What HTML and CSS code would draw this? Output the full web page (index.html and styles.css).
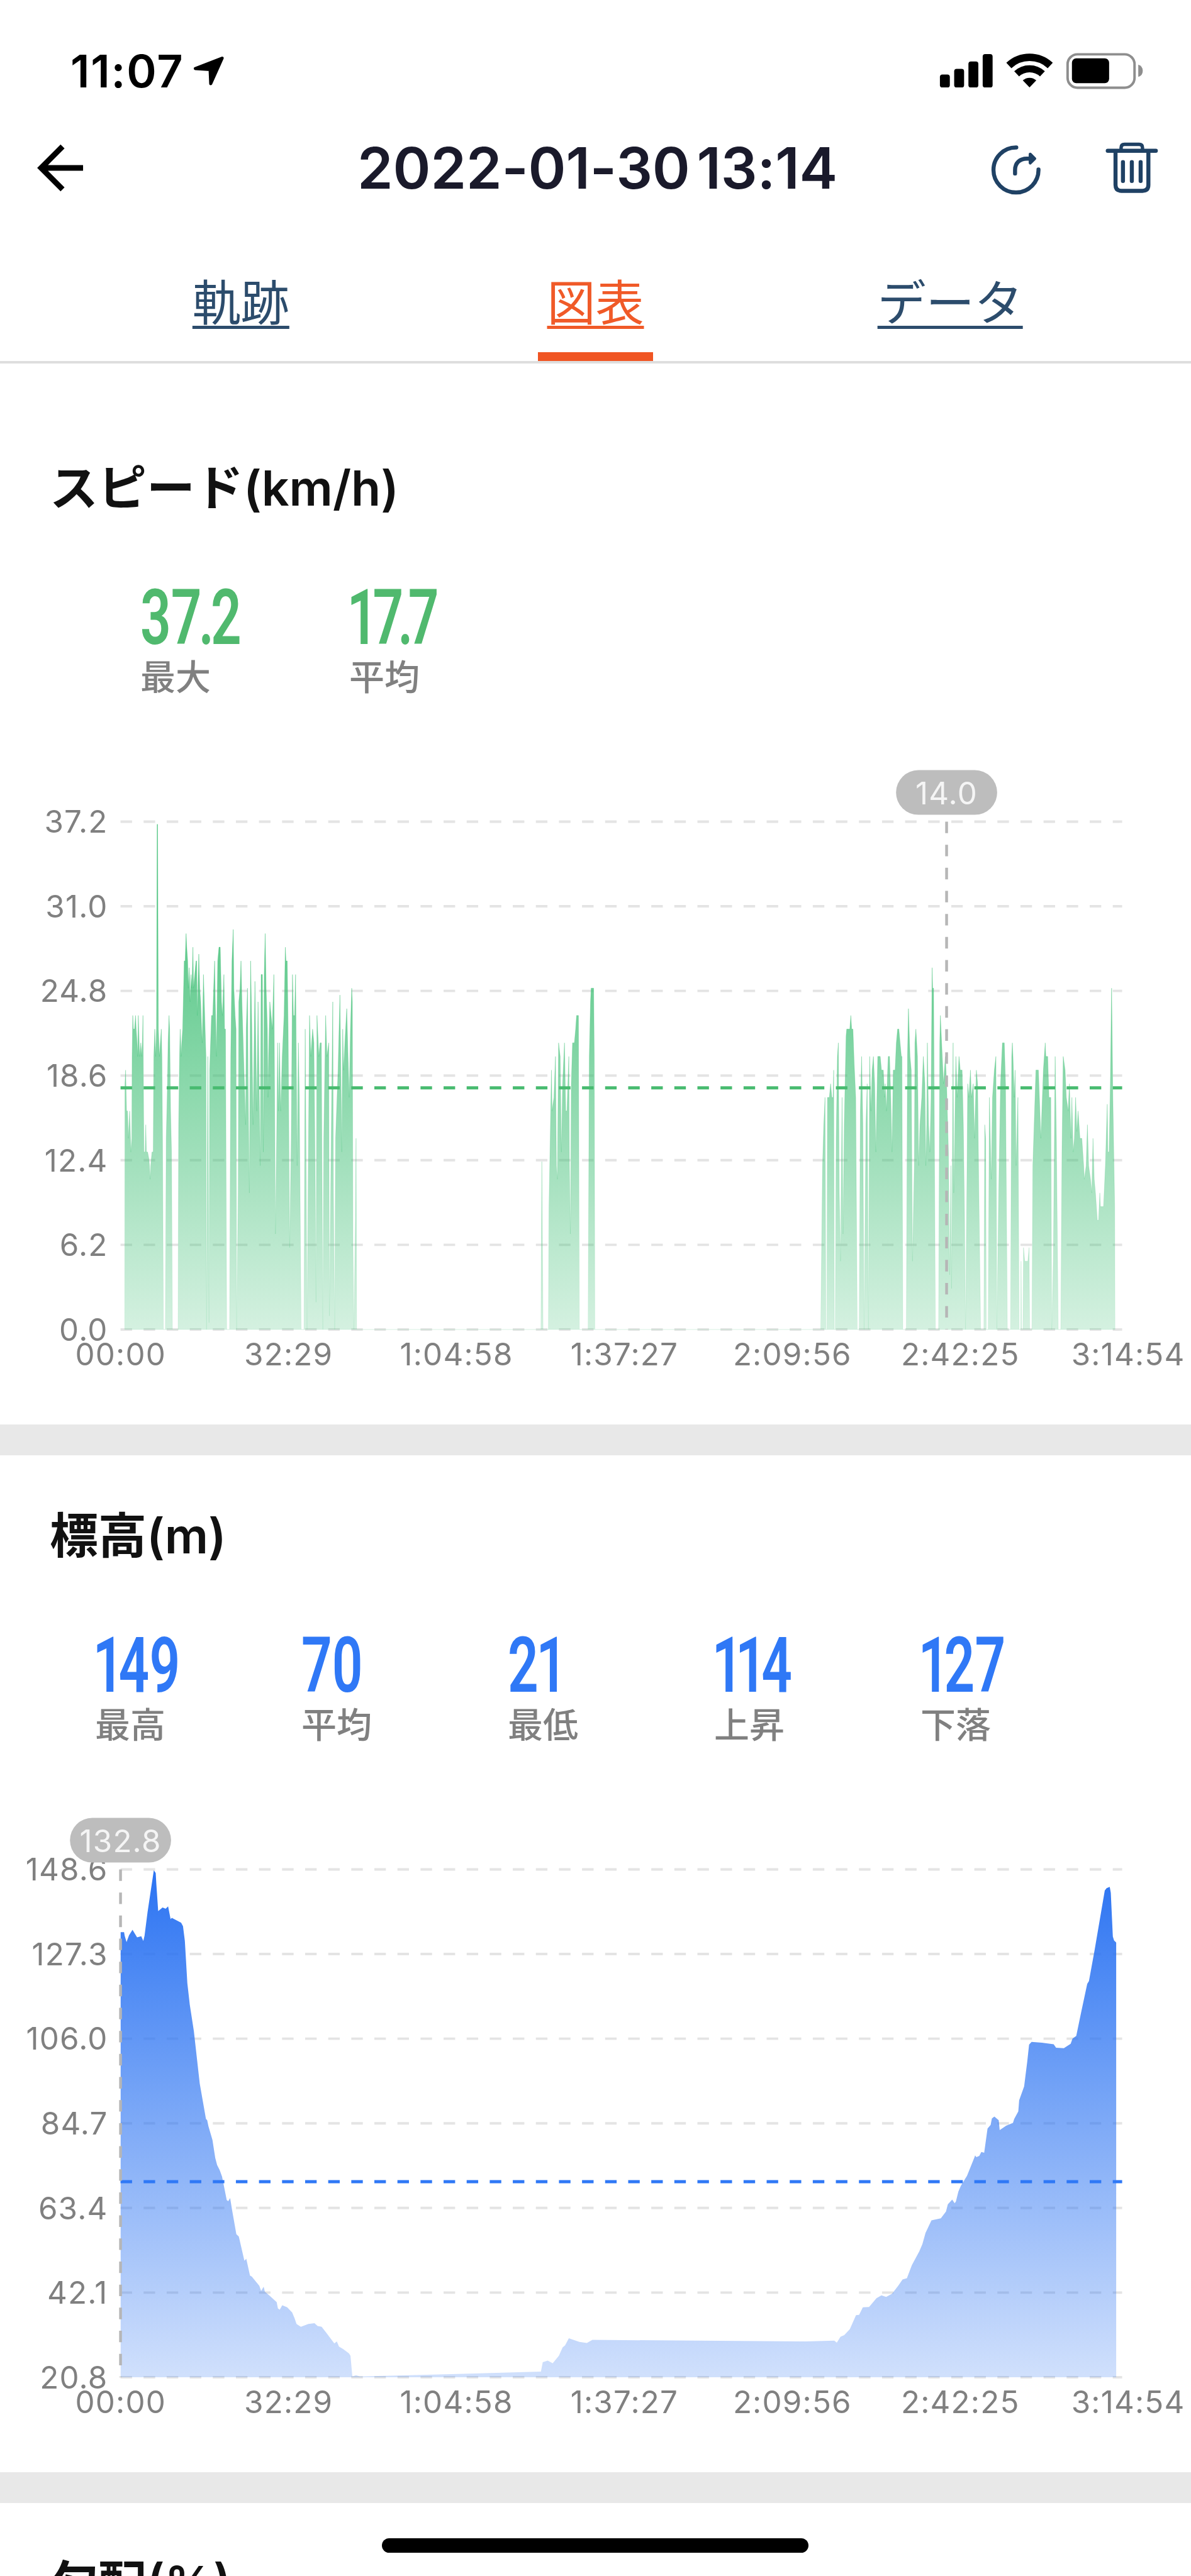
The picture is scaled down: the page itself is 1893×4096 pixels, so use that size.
FILE: index.html
```html
<!DOCTYPE html>
<html lang="ja">
<head>
  <meta charset="utf-8">
  <title>2022-01-30 13:14</title>
  <link rel="stylesheet" href="styles.css">
</head>
<body>
  <div class="status-bar">
    <div class="status-left">
      <span class="time">11:07</span>
      <svg class="location" viewBox="312 90 52 50">
        <path d="M359 94.5 L315.5 111.5 L339.5 113 L340.5 136 Z" fill="#000" stroke="#000" stroke-width="5" stroke-linejoin="round"/>
      </svg>
    </div>
    <svg class="status-icons" viewBox="1510 80 336 68">
      <rect x="1515" y="120" width="16" height="21" rx="4"/>
      <rect x="1538" y="111" width="16" height="30" rx="4"/>
      <rect x="1561" y="99" width="16" height="42" rx="4"/>
      <rect x="1584" y="87" width="16" height="54" rx="4"/>
      <g fill="none" stroke="#000">
        <path d="M1626.2 105.5 A49 49 0 0 1 1693 105.5" stroke-width="12"/>
        <path d="M1638.8 119 A30.5 30.5 0 0 1 1680.4 119" stroke-width="11.5"/>
      </g>
      <path d="M1659.6 141 L1648.7 129.6 A16 16 0 0 1 1670.5 129.6 Z"/>
      <rect x="1721" y="87.5" width="108" height="54" rx="16" fill="none" stroke="#8e8e8e" stroke-width="4"/>
      <rect x="1728" y="94" width="60" height="40" rx="7"/>
      <path d="M1835 104 A10.5 10.5 0 0 1 1835 124 Z" fill="#8e8e8e"/>
    </svg>
  </div>

  <div class="header">
    <svg class="back" viewBox="56 230 82 82">
      <path d="M101 236 L66.5 270.5 L101 305 M68 270.5 H134" fill="none" stroke="#000" stroke-width="9"/>
    </svg>
    <h1>2022-01-30 13:14</h1>
    <svg class="actions" viewBox="1590 222 280 96">
      <g fill="none" stroke="#1f4164" stroke-width="6.5" stroke-linecap="round" stroke-linejoin="round">
        <path d="M1638 236.5 A36.3 36.3 0 1 0 1673.8 272"/>
        <path d="M1636 278.5 V273 C1636 261 1644 254.5 1655 254.5 H1661"/>
        <path d="M1660.5 247.5 L1667.5 254.5 L1660.5 261.5 Z" fill="#1f4164" stroke-width="5"/>
        <path d="M1785.5 241.8 H1863"/>
        <path d="M1807 240 V237 Q1807 231.5 1812.5 231.5 H1836 Q1841.5 231.5 1841.5 237 V240" stroke-width="5.5"/>
        <path d="M1798 243 V297 Q1798 306.5 1807.5 306.5 H1841.5 Q1851 306.5 1851 297 V243"/>
        <path d="M1810 260 V290.5 M1824.3 260 V290.5 M1838.5 260 V290.5"/>
      </g>
    </svg>
  </div>

  <div class="tabs">
    <a class="tab">軌跡</a>
    <a class="tab active">図表</a>
    <a class="tab">データ</a>
  </div>

  <div class="section">
    <h2>スピード(km/h)</h2>
    <div class="stats speed">
      <div class="stat"><span class="value">37<i class="dot">.</i>2</span><span class="label">最大</span></div>
      <div class="stat"><span class="value"><i class="one">1</i>7<i class="dot tight">.</i>7</span><span class="label">平均</span></div>
    </div>
    <svg class="chart" id="speedChart" viewBox="0 0 1920 1097"></svg>
  </div>

  <div class="section">
    <h2>標高(m)</h2>
    <div class="stats altitude">
      <div class="stat"><span class="value"><i class="one">1</i>49</span><span class="label">最高</span></div>
      <div class="stat"><span class="value">70</span><span class="label">平均</span></div>
      <div class="stat"><span class="value">2<i class="one">1</i></span><span class="label">最低</span></div>
      <div class="stat"><span class="value"><i class="one">1</i><i class="one">1</i>4</span><span class="label">上昇</span></div>
      <div class="stat"><span class="value"><i class="one">1</i>27</span><span class="label">下落</span></div>
    </div>
    <svg class="chart" id="altitudeChart" viewBox="0 0 1920 1097"></svg>
  </div>

  <div class="section last">
    <h2>勾配(%)</h2>
  </div>

  <div class="home-indicator"></div>

  <script src="charts.js"></script>
</body>
</html>
```
FILE: styles.css
```css
* { box-sizing: border-box; }
body {
  position: relative;
  margin: 0;
  width: 1893px;
  height: 4096px;
  overflow: hidden;
  background: #fff;
  font-family: Inter, "Noto Sans CJK JP", sans-serif;
}
svg { display: block; flex: none; }
h1, h2 { margin: 0; font-weight: 600; white-space: nowrap; }

.status-bar {
  display: flex;
  justify-content: space-between;
  align-items: center;
  height: 225px;
  padding: 0 73px 0 112px;
}
.status-left { display: flex; align-items: center; gap: 15px; }
.time { font-size: 72px; font-weight: 600; line-height: 80px; letter-spacing: 1.8px; }
.location { width: 51px; height: 49px; }
.status-icons { width: 331px; height: 67px; }

.header {
  display: flex;
  justify-content: space-between;
  align-items: center;
  height: 85px;
  padding: 0 49px 0 55px;
}
.header h1 { font-size: 91px; line-height: 85px; color: #1a1a2b; letter-spacing: -0.2px; word-spacing: -12px; margin-left: 195px; }
.back { width: 81px; height: 81px; }
.actions { width: 276px; height: 95px; }

.tabs {
  display: flex;
  height: 268px;
  padding: 0 101px;
  border-bottom: 4px solid #dedede;
  margin-bottom: 70px;
}
.tab {
  display: flex;
  flex: 1;
  flex-direction: column;
  align-items: center;
  padding-top: 113px;
  font-size: 77px;
  line-height: 118px;
  color: #2c4c6c;
  text-decoration: underline;
  text-decoration-thickness: 5px;
  text-underline-offset: 8px;
  text-decoration-skip-ink: none;
}
.tab.active { color: #f05a28; }
.tab.active::after {
  content: "";
  width: 183px;
  height: 14px;
  margin-top: 19px;
  background: #f05523;
}

.section {
  height: 1666px;
  padding-top: 69px;
  border-bottom: 49px solid #e8e8e8;
}
.section.last { height: 116px; border: 0; overflow: hidden; }
.section h2 { padding-left: 79px; font-size: 77px; line-height: 118px; color: #111; }
.stats { display: flex; margin-top: 89px; }
.speed { padding-left: 223px; color: #50b96e; }
.altitude { padding-left: 151px; color: #2f78f6; }
.stat { display: flex; flex-direction: column; width: 328px; }
.speed .stat { width: 332px; }
.value {
  font-family: Roboto, sans-serif;
  font-size: 122px;
  font-weight: 600;
  line-height: 118px;
  transform: scaleX(0.7);
  transform-origin: left;
}
/* narrow digits */
.value i { font-style: normal; }
.value .one { margin: 0 -11px 0 -5px; }
.value .dot { margin: 0 -7px; }
.value .tight { margin: 0 -11px 0 -13px; }
.label { font-size: 56px; font-weight: 500; line-height: 71px; color: #808080; }
.chart { width: 1893px; height: 1082px; margin-top: 70px; }
.chart text { font-size: 50px; letter-spacing: 1.2px; fill: #808080; }
.chart .badge-text { fill: #f5f5f5; }

.home-indicator {
  position: absolute;
  left: 607px;
  bottom: 37px;
  width: 678px;
  height: 23px;
  border-radius: 12px;
  background: #000;
}
```
FILE: charts.js
```js
// plot area inside the chart viewBox
const LEFT = 194.3, RIGHT = 1809, TOP = 125, BOTTOM = 944;
const TIMES = ['00:00', '32:29', '1:04:58', '1:37:27', '2:09:56', '2:42:25', '3:14:54'];

// x, km/h
const speed = [
  201,0, 201.5,18, 202.5,19, 204,16, 205.5,16, 207,14, 209,16, 211,13, 212.5,14, 213,20, 214,23, 215,22, 217,22, 218.5,23, 219.5,22,
  221,21, 222,20, 223,23, 225,20, 227,21, 228.5,20, 229.5,21, 230.5,23, 231.5,16, 232,13, 234,13, 235,15, 236,13, 238,13, 240,12.5,
  241,12, 242,11, 243,12, 245,13, 247,13, 248,20, 249.5,22, 251,20, 252.3,22, 253.4,37, 254,37, 255.3,22, 257,20, 258.5,21, 260,22,
  261,20, 262,14, 263.5,0, 266.5,0, 268,14, 270,18, 271,21, 272.5,23, 273.5,22, 275,16, 276.5,13, 278,0,
  287,0, 288,15, 289.5,20, 290.5,22, 292,20, 293,21, 294.5,22, 297,27, 298.5,27, 300,29, 301,28, 302.5,27, 303.5,25, 305,26.5,
  306.5,24, 308,26, 309.5,25, 311,28, 312,25, 314,26, 316,27, 317,27, 318,23, 319,25, 320.5,27.5, 322,25, 323.5,24, 325,22, 326,21, 328,26, 330,23, 332,20,
  333,0, 335,20, 337,0.5, 338,19, 341,23, 343,23, 346,27, 347,24, 349,20, 351,27, 353,28, 355,28, 357,24, 358.5,23, 361,26, 362,22, 363.5,22, 365.5,0,
  370,0, 372,20, 374,27, 376,29.3, 377,25, 379,23, 380.5,22, 381.5,0, 384,10, 385,24, 387,25, 388.5,27, 390,24, 392,21, 394,18, 396,15, 397,22, 399,25,
  400,18, 402,10, 404,27, 406,22, 408,15, 411,25.5, 412,22, 414,16, 416,24, 418,17, 419.5,12, 421,26, 423,26, 424.5,13, 426,26, 427.5,29,
  429,25, 431,22, 432,17, 433,20, 435,24, 437,23, 439,22, 441.5,26, 443,15, 444,7, 446,14, 447.5,21, 449,16, 450.5,21, 452.5,16, 455,20,
  458,23, 460,28, 461,27, 463,27, 464.5,22, 466,12, 467,6, 469.5,14, 471.5,26, 473,23, 475,23, 476.5,26, 478,18, 479,12, 481,21, 482.5,17, 485.5,0,
  490,0, 492,22, 493.5,12, 495,0, 497,12, 499,23, 501,20, 504,22, 506,21, 508,12, 509.5,2, 511,23, 514,20, 516,21, 518,21, 520.5,0, 522,14,
  525,23, 527,20, 530,21, 531,1, 534,14, 536.5,24, 537.5,10, 539.5,0, 541,14, 545,19, 548,24.5, 550,17, 551,13, 552.5,22, 554,19, 556,21, 559,23.5, 561,20,
  563,17, 565,22, 567,25, 568,24, 569,6, 570.5,0, 573,8, 574,14, 575,0,
  872,0, 873.5,12.3, 875.5,0, 884,0, 885,9, 887,14, 889,19, 890,16, 893,17, 895.5,20, 897,12, 898.5,11, 900.5,21, 903,20, 905,13, 907,18, 910,21,
  912,16, 914,16, 917,20, 918,12, 919.5,7, 921,18, 923,21, 926,21, 928,22, 929.5,23, 932.5,23, 934,0,
  948,0, 950,20, 952,24, 953,25, 957,25, 958,20, 959,0,
  1323,0, 1326,12, 1328,15, 1330,17, 1331.5,0, 1333,0, 1334,17, 1337,17, 1339,18, 1341,17, 1343,17, 1344,19, 1345,0, 1346.5,0, 1348,14, 1350,20, 1351.5,21, 1353,10,
  1355,5, 1357.5,17, 1359,7, 1361,15, 1364,21.5, 1365,22, 1370,22, 1371.6,23, 1373,22, 1375,22, 1377,19.5, 1379.5,17, 1382,0, 1385,0, 1387,16, 1389,20,
  1391,15, 1393,0, 1396,15, 1398,18, 1400,0, 1402,20, 1404,16, 1406,19, 1408,20, 1410,18, 1412,13, 1415,20, 1419,20, 1421,19, 1424,19, 1426,17,
  1427,18, 1429,16, 1431,19, 1432,20, 1434,20, 1436,17, 1438,13, 1440,19, 1443,19, 1445,21, 1447,22, 1449,22, 1451,21, 1453,20, 1454,20, 1455.5,0,
  1461,0, 1463,20, 1464.5,23.5, 1467,20, 1469,19, 1471,5, 1474,12, 1475,21, 1476.5,22, 1479,20, 1481,12, 1483,15, 1486,17, 1488.5,20, 1491,18, 1492.5,12,
  1494,15, 1495,21, 1497,15, 1499,13, 1501,17, 1502.7,26.5, 1503.5,25, 1505,25, 1506,17, 1508,0, 1513,0, 1515,21, 1516,23, 1518,21, 1521,18, 1524,20,
  1526,18, 1529,13, 1531,4, 1533,12, 1534,3, 1536.5,21, 1537.5,10, 1539,14, 1541,20, 1543,17, 1546,20, 1548,19, 1551,19, 1553,15, 1555,8, 1556.5,0,
  1559,12, 1560,18, 1562,17, 1564.5,19, 1566,17, 1569,18, 1571,14, 1574,19, 1576,18, 1578,10, 1581,0, 1586,0, 1587.5,15, 1589,14, 1590,0,
  1593,0, 1595,17, 1598,11, 1600,17, 1603,19, 1605.5,20, 1607,0, 1610,10, 1613,18, 1616,21, 1619,21, 1621,18, 1624,0,
  1629,0, 1631,20, 1632,21, 1633,20, 1635,17, 1636.5,19, 1638,12, 1641,17, 1643,0, 1645.5,0, 1646,5, 1647,0, 1649,0, 1650,6, 1652,5, 1657,5, 1659,6, 1660,0,
  1663.5,0, 1665,12, 1670,19, 1674,19, 1678,14, 1682,19, 1685,21, 1686,20, 1689,20, 1691,17, 1694,17, 1695.5,0, 1698,5, 1701,20, 1703,14, 1706,0,
  1710,0, 1712,13, 1714,20, 1717,19, 1719,17, 1722,16, 1724,18, 1726.5,14, 1728,17, 1730,13, 1732,14, 1734,17, 1736,14.5, 1738,16, 1741,14, 1744,14, 1747,12, 1748,11,
  1751,12, 1753,15, 1755,12, 1758,11, 1760,10, 1762,14, 1764,11, 1766,10, 1769,8, 1771,8, 1773,10, 1774,9, 1779,9, 1782,12, 1785,16.5, 1786,13, 1788,13,
  1790,18, 1792,25, 1794,17, 1797,9, 1797.5,0
];

// x, metres
const altitude = [
  194.5,132.8, 200,132.8, 201,131.9, 204,130.3, 208,132, 213.6,133.4, 221,131.5, 227.7,131.8, 231,130.6, 233,131.9, 238,138, 248,148.4, 251,147.7, 252,145,
  255,138.1, 262,139, 267,138.7, 271,139.3, 275,136.1, 277,136.4, 292,135.2, 295,134.3, 298,130.6, 302,120, 306,114.5, 312.5,107.9, 322,94.7, 332,85.8,
  334,85.5, 336,84, 342.5,80.5, 347,76, 350,74.2, 354,73, 358,71.3, 365.5,65.4, 368,65.1, 371,65.9, 374,63, 381,56.8, 385,56.2, 394,50.1, 397,50.6,
  403,46.4, 406,46.1, 418,43.8, 421,42.5, 425,43.6, 427,42.3, 434,41.4, 446,39.7, 448,38.1, 451,37.8, 455,38.9, 463,38.4, 471,37.1, 475,35.6, 478,34.2,
  485,33.5, 497,34.2, 507,34.4, 512,33.7, 518.5,33.5, 527,31.8, 539,29.3, 543,29.8, 546.5,28.5, 553,27.9, 562.5,26.8, 565,26.2, 568,21, 574,21.3, 580,21,
  640,21.2, 872,22.2, 875,24.6, 883,25, 891,24.3, 901,26.2, 907,28.3, 911,28.8, 917,30.6, 934,29.7, 946,29.4, 955,30.2, 1300,29.8, 1345,30,
  1349,29.5, 1355,31, 1361,31.4, 1370,32.9, 1380,36.4, 1385,36.5, 1391,38.4, 1401,38.5, 1413,40.7, 1421,41.4, 1428.5,41, 1438,41.8, 1448,43.8, 1455,45.4,
  1462,45.7, 1470,49, 1482,52.5, 1487,54.3, 1492,57.1, 1501.6,60.3, 1516.7,60.8, 1525,62.5, 1528,64.3, 1535,65.5, 1539,64.6, 1541,65, 1545,67.5, 1549,69,
  1559,71.5, 1571,76.2, 1572,76.6, 1574,76.2, 1578.7,76.5, 1582,77.5, 1586.6,77.3, 1592,83.4, 1597,84.3, 1599,85.9, 1603,86.4, 1610,85.5, 1611.6,83,
  1622,84.1, 1633,84.8, 1635,85.8, 1641.6,87.7, 1643,90.5, 1651,94, 1656,100.2, 1659,104.5, 1663,105.2, 1679.6,105, 1698.6,104.6, 1702.5,103.7,
  1715,103.6, 1726,104.7, 1729,106, 1735,106.7, 1743,112.7, 1752.7,119.8, 1755.5,120.5, 1764.6,128.3, 1781,143.3, 1784,143.9, 1789,144.2,
  1790.7,142.7, 1794,131.7, 1796,130.7, 1799.4,130.2
];

function drawChart(id, opt) {
  const y = v => BOTTOM - (v - opt.min) / (opt.max - opt.min) * (BOTTOM - TOP);
  const dash = 'stroke-dasharray="18.6 18.6"';
  let out = `<defs><linearGradient id="${id}Fill" gradientUnits="userSpaceOnUse" x1="0" y1="${TOP}" x2="0" y2="${BOTTOM}">
    <stop offset="0" stop-color="${opt.fill}"/><stop offset="1" stop-color="${opt.fill}" stop-opacity="0.22"/>
  </linearGradient></defs>`;

  for (let i = 0; i <= 6; i++) {
    const v = opt.max - (opt.max - opt.min) * i / 6;
    out += `<path d="M${LEFT} ${y(v)}H${RIGHT}" stroke="#e4e4e4" stroke-width="4" ${dash}/>`;
    out += `<text x="174" y="${y(v) + 18}" text-anchor="end">${v.toFixed(1)}</text>`;
    out += `<text x="${194.5 + 270.7 * i}" y="1002" text-anchor="middle">${TIMES[i]}</text>`;
  }

  let d = `M${opt.data[0]} ${BOTTOM}`;
  for (let i = 0; i < opt.data.length; i += 2) {
    d += `L${opt.data[i]} ${y(opt.data[i + 1]).toFixed(1)}`;
  }
  d += `L${opt.data[opt.data.length - 2]} ${BOTTOM}Z`;
  out += `<path d="${d}" fill="url(#${id}Fill)"/>`;
  // second thin pass so one-sample spikes stay visible
  if (opt.spikes) {
    out += `<path d="${d}" fill="none" stroke="url(#${id}Fill)" stroke-width="0.8" stroke-linejoin="bevel" opacity="0.6"/>`;
  }

  // average line
  out += `<path d="M${LEFT} ${y(opt.avg)}H${RIGHT}" stroke="${opt.line}" stroke-width="5" ${dash}/>`;

  // selected point
  out += `<path d="M${opt.mark} ${TOP}V${BOTTOM}" stroke="#b6b6b6" stroke-width="4.5" ${dash}/>`;
  out += `<rect x="${opt.mark - 81.5}" y="42" width="163" height="72" rx="36" fill="#bdbdbd"/>`;
  out += `<text class="badge-text" x="${opt.mark}" y="97" text-anchor="middle">${opt.markText}</text>`;

  document.getElementById(id).innerHTML = out;
}

drawChart('speedChart', { data: speed, min: 0, max: 37.2, avg: 17.7, mark: 1526, markText: '14.0', fill: '#3cbe73', line: '#48bb70', spikes: true });
drawChart('altitudeChart', { data: altitude, min: 20.8, max: 148.6, avg: 70, mark: 194.3, markText: '132.8', fill: '#2b73f2', line: '#2f78f6' });
```
